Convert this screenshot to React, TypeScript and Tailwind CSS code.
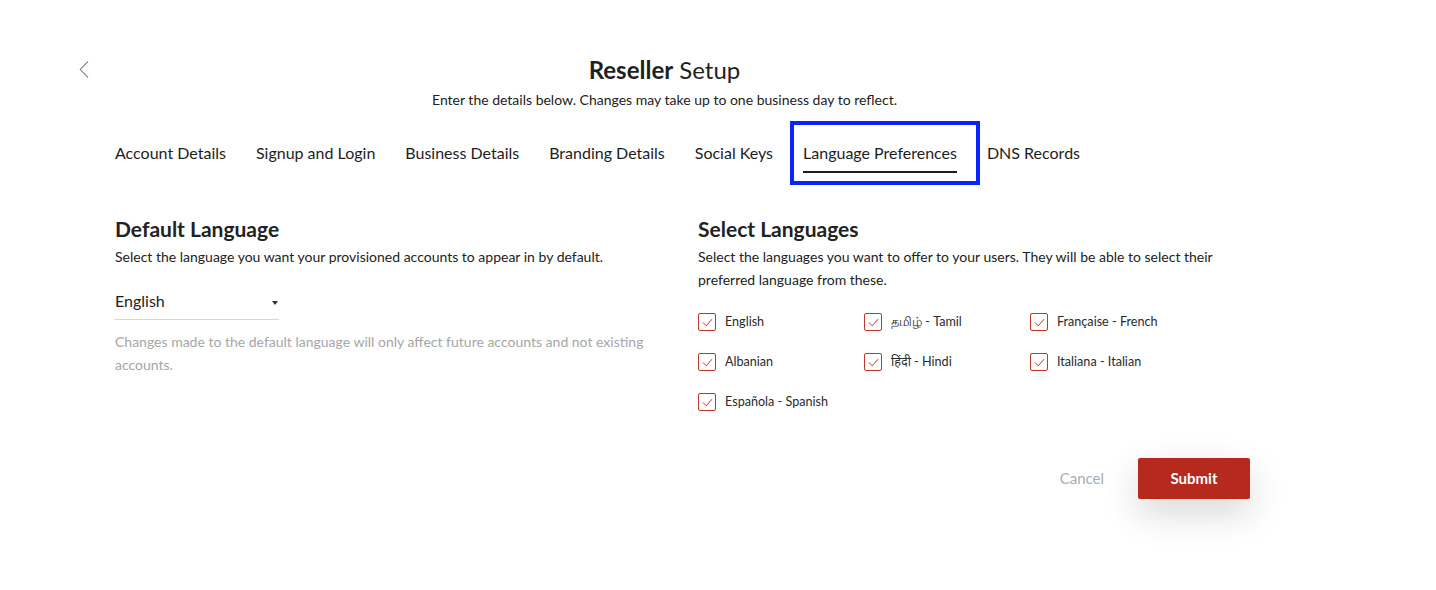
import { useState } from "react";

const tabs = [
  "Account Details",
  "Signup and Login",
  "Business Details",
  "Branding Details",
  "Social Keys",
  "Language Preferences",
  "DNS Records",
];

const languages = [
  "English",
  "தமிழ் - Tamil",
  "Française - French",
  "Albanian",
  "हिंदी - Hindi",
  "Italiana - Italian",
  "Española - Spanish",
];

function CheckBox({ checked }: { checked: boolean }) {
  return (
    <span className="flex h-[18px] w-[18px] shrink-0 items-center justify-center rounded-[2px] border border-[#c2362a] bg-white">
      {checked && (
        <svg width="11" height="9" viewBox="0 0 11 9" fill="none">
          <path d="M1 4.6 L4.2 7.8 L10 1.2" stroke="#c2362a" strokeWidth="1" />
        </svg>
      )}
    </span>
  );
}

export default function App() {
  const [active] = useState("Language Preferences");
  const [selected, setSelected] = useState<string[]>(languages);

  const toggle = (lang: string) => {
    setSelected((s) => (s.includes(lang) ? s.filter((l) => l !== lang) : [...s, lang]));
  };

  return (
    <div className="min-h-[590px] bg-white font-['Lato','Noto_Sans',sans-serif] text-[#222]">
      <div className="ml-[79px] w-[1171px] pt-[55px]">
        {/* header */}
        <div className="grid grid-cols-[1fr_auto_1fr]">
          <div className="pt-[6px]">
            <svg width="10" height="17" viewBox="0 0 10 17" fill="none">
              <path d="M9 0.5 L1.2 8.5 L9 16.5" stroke="#8f8f86" strokeWidth="1.1" />
            </svg>
          </div>
          <div className="text-center">
            <h1 className="text-[24px] leading-[29px] text-[#1f1f1f]">
              <span className="font-bold">Reseller</span> Setup
            </h1>
            <p className="mt-[6px] text-[14px] leading-[20px] text-[#222]">
              Enter the details below. Changes may take up to one business day to reflect.
            </p>
          </div>
          <div />
        </div>

        <div className="pl-[36px]">
          {/* tabs */}
          <div className="mt-[11px] flex gap-[30px]">
            {tabs.map((t) => (
              <div key={t} className="relative h-[64px] pt-[22px]">
                <span className="block text-[16px] leading-[20px] text-[#1d1d1d]">{t}</span>
                {t === active && (
                  <>
                    <div className="mt-[8px] h-[2px] bg-[#1d1d1d]" />
                    <div className="absolute -left-[13px] -right-[23px] top-0 bottom-0 border-[4px] border-[#0b24fb]" />
                  </>
                )}
              </div>
            ))}
          </div>

          {/* columns */}
          <div className="mt-[31px] flex">
            <div className="w-[583px] shrink-0">
              <h2 className="text-[21px] font-bold leading-[25px] text-[#222]">Default Language</h2>
              <p className="mt-[4px] text-[14px] leading-[23px] text-[#222]">
                Select the language you want your provisioned accounts to appear in by default.
              </p>
              <div className="mt-[23px] flex w-[164px] items-center justify-between border-b border-[#d8d8dc] pb-[8px]">
                <span className="text-[16px] leading-[20px] text-[#1d1d1d]">English</span>
                <span className="mr-[1px] mt-[3px] h-0 w-0 border-x-[3.5px] border-t-[4px] border-x-transparent border-t-[#333]" />
              </div>
              <p className="mt-[10px] text-[14px] leading-[23px] text-[#a6a6a6]">
                Changes made to the default language will only affect future accounts and not existing accounts.
              </p>
            </div>

            <div className="flex-1">
              <h2 className="text-[21px] font-bold leading-[25px] text-[#222]">Select Languages</h2>
              <p className="mt-[4px] text-[14px] leading-[23px] text-[#222]">
                Select the languages you want to offer to your users. They will be able to select their preferred
                language from these.
              </p>
              <div className="mt-[22px] grid grid-cols-[166px_166px_166px] gap-y-[22px]">
                {languages.map((lang) => (
                  <label
                    key={lang}
                    className="flex h-[18px] cursor-pointer items-center gap-[9px]"
                    onClick={() => toggle(lang)}
                  >
                    <CheckBox checked={selected.includes(lang)} />
                    <span className="whitespace-nowrap text-[12.6px] leading-[18px] text-[#2a2a2a]">{lang}</span>
                  </label>
                ))}
              </div>
            </div>
          </div>
        </div>

        {/* actions */}
        <div className="mt-[47px] flex items-center justify-end gap-[34px]">
          <button className="text-[15px] text-[#a9adb5]">Cancel</button>
          <button className="h-[41px] w-[112px] rounded-[2px] bg-[#b52a1c] text-[15px] font-bold text-white shadow-[0_14px_36px_rgba(0,0,0,0.16)]">
            Submit
          </button>
        </div>
      </div>
    </div>
  );
}
